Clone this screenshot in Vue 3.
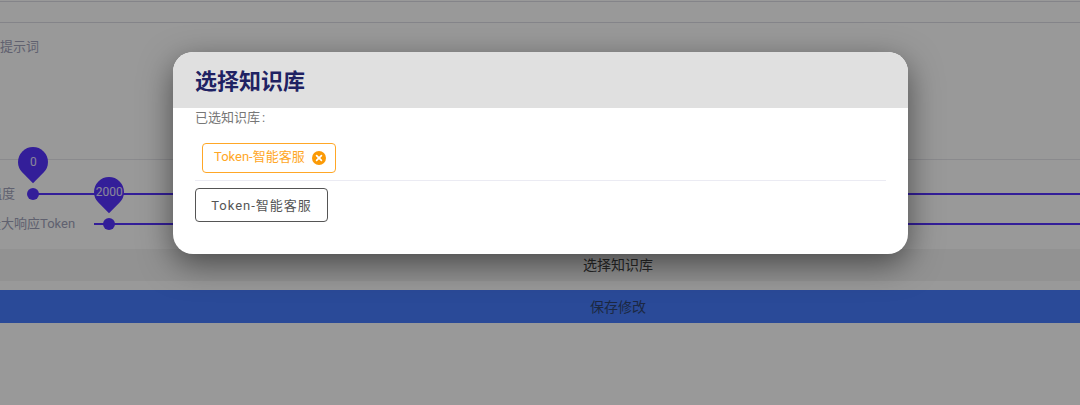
<script setup>
const sliders = [
  { label: '温度', value: '0', pinClass: 'pin-first', rowClass: 'row-first' },
  { label: '最大响应Token', value: '2000', pinClass: 'pin-second', rowClass: 'row-second' }
]
const kbName = 'Token-智能客服'
</script>

<template>
  <div class="page">
    <div class="rule rule-top"></div>
    <div class="rule rule-second"></div>
    <div class="prompt-label">提示词</div>
    <div class="rule rule-third"></div>
    <div v-for="s in sliders" :key="s.label" class="slider-row" :class="s.rowClass">
      <span class="slider-label">{{ s.label }}</span>
      <div class="track">
        <span class="thumb"></span>
        <span class="pin" :class="s.pinClass"><span class="pin-text">{{ s.value }}</span></span>
      </div>
    </div>
    <div class="select-btn">选择知识库</div>
    <div class="save-btn">保存修改</div>

    <div class="overlay"></div>
    <div class="modal">
      <header class="modal-head">选择知识库</header>
      <div class="modal-body">
        <div class="selected-label">已选知识库<span class="colon">:</span></div>
        <div class="chips">
          <span class="chip">
            <span class="chip-text">{{ kbName }}</span>
            <svg class="chip-x" viewBox="0 0 14 14" width="14" height="14">
              <circle cx="7" cy="7" r="7" fill="#fb9a06" />
              <path d="M4.6 4.6 9.4 9.4M9.4 4.6 4.6 9.4" stroke="#fff" stroke-width="1.7" stroke-linecap="round" />
            </svg>
          </span>
        </div>
        <div class="divider"></div>
        <button class="kb-btn" type="button">{{ kbName }}</button>
      </div>
    </div>
  </div>
</template>

<style>
html, body { margin: 0; padding: 0; }
</style>

<style scoped>
.page {
  position: relative;
  width: 1080px;
  height: 405px;
  overflow: hidden;
  background: #fff;
  font-family: Roboto, "Noto Sans CJK SC", sans-serif;
  display: flex;
  flex-direction: column;
}
.rule { height: 1px; background: #dcdce4; flex: none; }
.rule-top { margin-top: 1px; }
.rule-second { margin-top: 20px; }
.prompt-label {
  margin-top: 14px;
  height: 21px;
  line-height: 20px;
  font-size: 13px;
  color: #a0a2ba;
}
.rule-third { margin-top: 101px; background: #e6e6ec; }
.slider-row {
  display: flex;
  align-items: center;
  height: 20px;
  flex: none;
}
.row-first { margin-top: 24px; }
.row-second { margin-top: 10px; }
.slider-label {
  font-size: 13px;
  line-height: 20px;
  height: 20px;
  color: #a0a2ba;
  white-space: nowrap;
  flex: none;
}
.row-first .slider-label { margin-left: -11px; width: 39px; }
.row-second .slider-label { margin-left: -12px; width: 106px; }
.track {
  position: relative;
  flex: 1;
  height: 2px;
  background: #5632ff;
}
.thumb {
  position: absolute;
  top: 50%;
  width: 12px;
  height: 12px;
  margin-top: -6px;
  border-radius: 50%;
  background: #5632ff;
}
.row-first .thumb { left: -1px; }
.row-second .thumb { left: 9px; }
.pin {
  position: absolute;
  bottom: 18px;
  width: 30px;
  height: 30px;
  background: #5632ff;
  border-radius: 50% 50% 0 50%;
  transform: rotate(45deg);
  display: flex;
  align-items: center;
  justify-content: center;
}
.pin-first { left: -10px; }
.pin-second { left: 0; }
.pin-text {
  transform: rotate(-45deg);
  font-size: 12px;
  color: #fff;
  opacity: 0.85;
  line-height: 1;
}
.select-btn {
  margin-top: 15px;
  height: 32px;
  line-height: 33px;
  padding-left: 156px;
  text-align: center;
  background: #f3f3f3;
  color: #444;
  font-size: 14px;
  flex: none;
}
.save-btn {
  margin-top: 9px;
  height: 33px;
  line-height: 34px;
  padding-left: 156px;
  text-align: center;
  background: #467cfd;
  color: #2f4470;
  font-size: 14px;
  flex: none;
}
.overlay {
  position: absolute;
  inset: 0;
  background: rgba(0, 0, 0, 0.4);
}
.modal {
  position: absolute;
  left: 173px;
  top: 52px;
  width: 735px;
  height: 202px;
  background: #fff;
  border-radius: 20px;
  overflow: hidden;
  box-shadow: 0 10px 32px rgba(0, 0, 0, 0.5);
}
.modal-head {
  height: 56px;
  box-sizing: border-box;
  padding: 0 22px;
  line-height: 60px;
  background: #e0e0e0;
  color: #1f2263;
  font-size: 22px;
  font-weight: 700;
}
.modal-body {
  padding: 0 22px;
  display: flex;
  flex-direction: column;
  align-items: flex-start;
}
.selected-label {
  height: 19px;
  line-height: 19px;
  font-size: 13px;
  color: #777;
}
.colon { margin-left: 2px; }
.chips {
  align-self: stretch;
  padding: 16px 7px 7px;
}
.chip {
  display: inline-flex;
  align-items: center;
  box-sizing: border-box;
  height: 30px;
  width: 134px;
  padding: 0 9px 0 11px;
  justify-content: space-between;
  border: 1px solid #ffa726;
  border-radius: 4px;
  color: #ffa726;
  font-size: 13px;
  vertical-align: top;
}
.chip-text { line-height: 26px; height: 28px; }
.chip-x { flex: none; }
.divider {
  align-self: stretch;
  height: 1px;
  background: #ebebf3;
}
.kb-btn {
  margin-top: 7px;
  box-sizing: border-box;
  width: 133px;
  height: 34px;
  padding: 0 0 1px;
  background: #fff;
  border: 1px solid #555;
  border-radius: 4px;
  color: #555;
  font-family: inherit;
  font-size: 13px;
  letter-spacing: 1px;
}
</style>
